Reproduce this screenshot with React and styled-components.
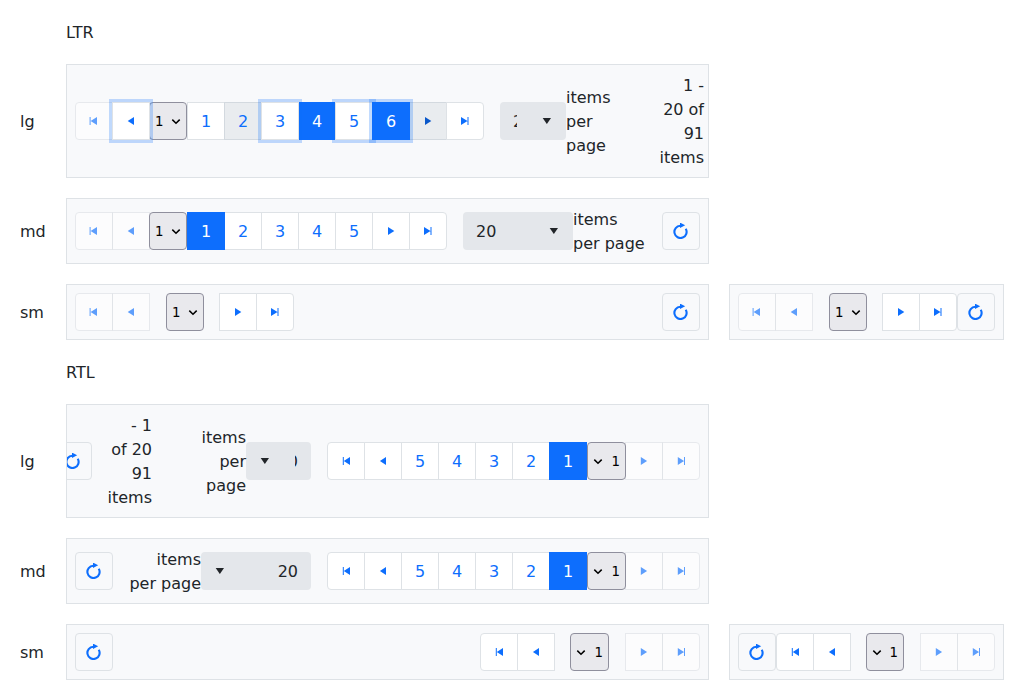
import React from "react";
import styled, { createGlobalStyle, css } from "styled-components";

const GlobalStyle = createGlobalStyle`
  *, *::before, *::after { box-sizing: border-box; }
  body {
    margin: 0;
    background: #fff;
    color: #212529;
    font: 16px/24px "DejaVu Sans", sans-serif;
  }
`;

const Page = styled.main`
  display: grid;
  grid-template-columns: 26px 643px 275px;
  gap: 20px;
  padding: 20px;
  width: 1024px;
  height: 700px;
  align-items: center;
  align-content: start;
  overflow: hidden;
`;

const Heading = styled.div`
  grid-column: 2 / -1;
  height: 24px;
  padding-top: 1px;
`;

const RowLabel = styled.div`
  grid-column: 1;
  padding-top: 2px;
  white-space: nowrap;
`;

const PagerBar = styled.div`
  display: flex;
  align-items: center;
  height: ${(p) => p.$height}px;
  padding: 8px;
  border: 1px solid #dee2e6;
  background: #f8f9fb;
  overflow: hidden;
  direction: ${(p) => p.$dir};
`;

const Group = styled.div`
  display: flex;
  flex: none;
`;

const PageButton = styled.button`
  position: relative;
  display: flex;
  flex: none;
  align-items: center;
  justify-content: center;
  width: 38px;
  height: 38px;
  padding: 0;
  border: 1px solid #dee2e6;
  background: #fff;
  color: #0d6efd;
  font: inherit;
  & + & { margin-inline-start: -1px; }
  ${(p) => p.$edge === "start" && css`
    border-start-start-radius: 4px;
    border-end-start-radius: 4px;
  `}
  ${(p) => p.$edge === "end" && css`
    border-start-end-radius: 4px;
    border-end-end-radius: 4px;
  `}
  ${(p) => p.$hover && css`
    background: #e9ecef;
    border-color: #d3d9df;
  `}
  ${(p) => p.$hover && p.$arrow && css`color: #0a58ca;`}
  ${(p) => p.$selected && css`
    background: #0d6efd;
    border-color: #0d6efd;
    color: #fff;
    z-index: 1;
  `}
  ${(p) => p.$focus && css`
    box-shadow: 0 0 0 3px rgba(13, 110, 253, 0.25);
    z-index: 2;
  `}
  ${(p) => p.disabled && css`opacity: 0.65;`}
`;

const Digit = styled.span`
  padding-top: 2px;
`;

const RefreshButton = styled.button`
  display: flex;
  flex: none;
  align-items: center;
  justify-content: center;
  width: 38px;
  height: 38px;
  padding: 0;
  margin-inline-start: ${(p) => (p.$push ? "auto" : "0")};
  border: 1px solid #dee2e6;
  border-radius: 4px;
  background: #f8f9fb;
  color: #0d6efd;
`;

const PageSelect = styled.div`
  position: relative;
  display: flex;
  flex: none;
  align-items: center;
  justify-content: space-between;
  width: ${(p) => p.$width}px;
  height: 38px;
  padding-inline: 5px 6px;
  margin-inline: ${(p) => (p.$compact ? "16px 15px" : "-1px 0")};
  border: 1px solid #8f8f9d;
  border-radius: 4px;
  background: #e9e9ed;
  color: #000;
  font-size: 13.333px;
`;

const SizeDropdown = styled.div`
  display: flex;
  flex: none;
  align-items: center;
  width: ${(p) => p.$width}px;
  height: 38px;
  margin-inline-start: 16px;
  padding-inline-start: 13px;
  border-radius: 4px;
  background: #e4e7eb;
`;

const SizeValue = styled.span`
  flex: 1;
  min-width: 0;
  padding-top: 2px;
  overflow: hidden;
  white-space: nowrap;
`;

const SizeArrow = styled.span`
  display: flex;
  flex: none;
  justify-content: center;
  width: 38px;
  margin-inline-start: 11px;
`;

const SizeLabel = styled.span`
  flex: none;
  width: ${(p) => p.$width}px;
  padding-top: 2px;
`;

const Info = styled.span`
  flex: none;
  width: 46px;
  padding-top: 2px;
  margin-inline: ${(p) => (p.$dir === "rtl" ? "48px 14px" : "46px 16px")};
  text-align: right;
`;

const Glyph = styled.svg`
  display: block;
  flex: none;
  width: 16px;
  height: 16px;
  fill: currentColor;
`;

const arrowPaths = {
  ltr: {
    first: "M3.6 4h1v8h-1zM11 4v8L4.6 8z",
    prev: "M11 4v8L4.7 8z",
    next: "M5 4v8l6.3-4z",
    last: "M10.5 4h1v8h-1zM4 4v8l6.5-4z",
    down: "M3.7 5h8.3l-4.15 6z",
  },
  rtl: {
    first: "M11 4h1v8h-1zM4.8 4v8l6.2-4z",
    prev: "M4.8 4v8l6.3-4z",
    next: "M11 4v8L4.9 8z",
    last: "M4.8 4h1v8h-1zM12 4v8L5.8 8z",
    down: "M3.7 5h8.3l-4.15 6z",
  },
};

const Arrow = ({ dir, name }) => (
  <Glyph viewBox="0 0 16 16"><path d={arrowPaths[dir][name]} /></Glyph>
);

const RefreshIcon = () => (
  <Glyph viewBox="0 0 16 16">
    <path d="M12.7 5.7A6.1 6.1 0 1 1 7.3 2.8" fill="none" stroke="currentColor" strokeWidth="2.1" />
    <path d="M7-.4 12.2 2.2 7 5z" />
  </Glyph>
);

const ChevronGlyph = styled.svg`
  display: block;
  width: 8px;
  height: 5px;
  fill: none;
  stroke: #000;
  stroke-width: 1.5;
  overflow: visible;
`;

function NumberSelect({ width = 38, compact }) {
  return (
    <PageSelect $width={width} $compact={compact}>
      <Digit>1</Digit>
      <ChevronGlyph viewBox="0 0 8 5"><path d="M.3.6 4 4.3 7.7.6" /></ChevronGlyph>
    </PageSelect>
  );
}

function Pager({ dir = "ltr", height, pages, states = {}, selectWidth, size, labelWidth, info, pushRefresh }) {
  const compact = !pages;
  const prev = states.prev;
  return (
    <PagerBar $dir={dir} $height={height}>
      <Group>
        <PageButton disabled $edge="start"><Arrow dir={dir} name="first" /></PageButton>
        <PageButton disabled={!prev} {...prev}><Arrow dir={dir} name="prev" /></PageButton>
      </Group>
      <NumberSelect width={selectWidth} compact={compact} />
      <Group>
        {pages?.map((n) => (
          <PageButton key={n} {...states[n]}><Digit>{n}</Digit></PageButton>
        ))}
        <PageButton $arrow {...states.next}><Arrow dir={dir} name="next" /></PageButton>
        <PageButton $edge="end"><Arrow dir={dir} name="last" /></PageButton>
      </Group>
      {size && (
        <>
          <SizeDropdown $width={size}>
            <SizeValue>20</SizeValue>
            <SizeArrow><Arrow dir={dir} name="down" /></SizeArrow>
          </SizeDropdown>
          <SizeLabel $width={labelWidth}>items per page</SizeLabel>
        </>
      )}
      {info && <Info $dir={dir}>1 - 20 of 91 items</Info>}
      <RefreshButton $push={pushRefresh}><RefreshIcon /></RefreshButton>
    </PagerBar>
  );
}

const five = [1, 2, 3, 4, 5];
const firstSelected = { 1: { $selected: true } };
const mixedStates = {
  prev: { $focus: true },
  2: { $hover: true },
  3: { $focus: true },
  4: { $selected: true },
  5: { $focus: true },
  6: { $selected: true, $focus: true },
  next: { $hover: true },
};

export default function App() {
  return (
    <>
      <GlobalStyle />
      <Page>
        <Heading>LTR</Heading>
        <RowLabel>lg</RowLabel>
        <Pager height={114} pages={[...five, 6]} states={mixedStates} size={66} labelWidth={46} info />
        <RowLabel>md</RowLabel>
        <Pager height={66} pages={five} states={firstSelected} size={110} labelWidth={73} pushRefresh />
        <RowLabel>sm</RowLabel>
        <Pager height={56} pushRefresh />
        <Pager height={56} />
        <Heading>RTL</Heading>
        <RowLabel>lg</RowLabel>
        <Pager dir="rtl" height={114} pages={five} states={firstSelected} selectWidth={39} size={65} labelWidth={46} info />
        <RowLabel>md</RowLabel>
        <Pager dir="rtl" height={66} pages={five} states={firstSelected} selectWidth={39} size={110} labelWidth={73} pushRefresh />
        <RowLabel>sm</RowLabel>
        <Pager dir="rtl" height={56} selectWidth={39} pushRefresh />
        <Pager dir="rtl" height={56} />
      </Page>
    </>
  );
}
